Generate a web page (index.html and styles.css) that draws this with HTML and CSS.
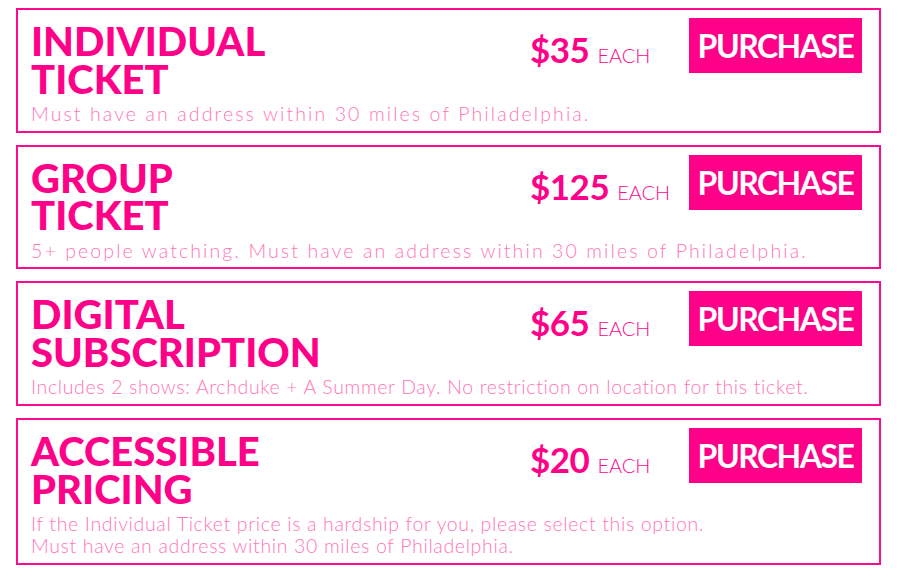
FILE: index.html
```html
<!DOCTYPE html>
<html lang="en">
<head>
<meta charset="utf-8">
<title>Tickets</title>
<link rel="stylesheet" href="styles.css">
</head>
<body>
<main class="tickets">
  <section class="card">
    <div class="card-top">
      <h2 class="title">INDIVIDUAL<br>TICKET</h2>
      <div class="buy">
        <div class="price"><span class="amount">$35</span><span class="each">EACH</span></div>
        <a class="btn" href="#">PURCHASE</a>
      </div>
    </div>
    <p class="desc desc-wide">Must have an address within 30 miles of Philadelphia.</p>
  </section>
  <section class="card">
    <div class="card-top">
      <h2 class="title">GROUP<br>TICKET</h2>
      <div class="buy">
        <div class="price"><span class="amount">$125</span><span class="each">EACH</span></div>
        <a class="btn" href="#">PURCHASE</a>
      </div>
    </div>
    <p class="desc desc-wide">5+ people watching. Must have an address within 30 miles of Philadelphia.</p>
  </section>
  <section class="card">
    <div class="card-top">
      <h2 class="title">DIGITAL<br>SUBSCRIPTION</h2>
      <div class="buy">
        <div class="price"><span class="amount">$65</span><span class="each">EACH</span></div>
        <a class="btn" href="#">PURCHASE</a>
      </div>
    </div>
    <p class="desc">Includes 2 shows: Archduke + A Summer Day. No restriction on location for this ticket.</p>
  </section>
  <section class="card">
    <div class="card-top">
      <h2 class="title">ACCESSIBLE<br>PRICING</h2>
      <div class="buy">
        <div class="price"><span class="amount">$20</span><span class="each">EACH</span></div>
        <a class="btn" href="#">PURCHASE</a>
      </div>
    </div>
    <p class="desc">If the Individual Ticket price is a hardship for you, please select this option.<br>Must have an address within 30 miles of Philadelphia.</p>
  </section>
</main>
</body>
</html>
```
FILE: styles.css
```css
* { box-sizing: border-box; }
html, body { margin: 0; padding: 0; background: #ffffff; }
body { font-family: "Lato", "Liberation Sans", sans-serif; color: #ff0088; }

.tickets {
  display: flex;
  flex-direction: column;
  gap: 12px;
  width: 881px;
  padding: 8px 0 0 16px;
}

.card {
  border: 2px solid #ff0a8c;
  padding: 8px 17px 6px 13px;
}

.card-top {
  display: flex;
  justify-content: space-between;
  align-items: flex-start;
}

.title {
  margin: 5px 0 0 0;
  font-size: 40px;
  line-height: 37.5px;
  font-weight: 900;
  color: #ff0088;
}

.buy {
  display: flex;
  align-items: flex-start;
}

.price {
  width: 159px;
  margin-top: 13px;
  display: flex;
  align-items: baseline;
  gap: 8px;
  line-height: 36px;
}

.amount {
  font-size: 35px;
  font-weight: 700;
  letter-spacing: -0.5px;
  color: #ff0088;
}

.each {
  font-size: 20px;
  font-weight: 300;
  color: #ff0a8c;
}

.btn {
  display: block;
  width: 173px;
  height: 55px;
  line-height: 55px;
  background: #ff0088;
  color: #ffffff;
  text-align: center;
  text-decoration: none;
  font-size: 32px;
  font-weight: 700;
  letter-spacing: -1.5px;
}

.desc {
  margin: 5px 0 0 0;
  font-size: 19.5px;
  line-height: 21.7px;
  font-weight: 300;
  letter-spacing: 0.65px;
  color: #ff76b6;
}

.desc-wide {
  letter-spacing: 2.1px;
}
```
